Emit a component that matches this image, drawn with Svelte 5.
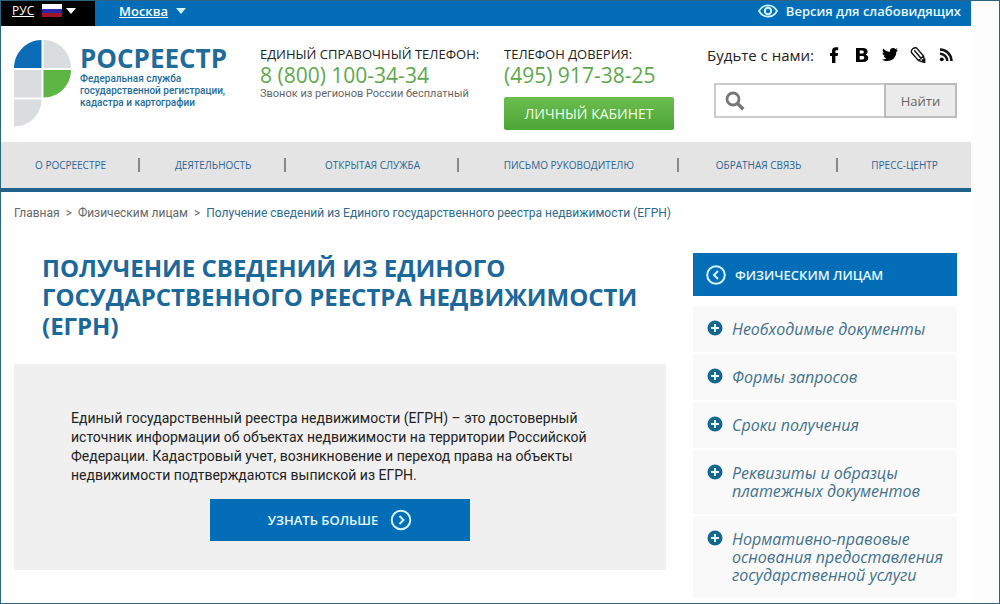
<script lang="ts">
	type MenuItem = { title: string; href: string };

	const navItems: MenuItem[] = [
		{ title: 'О РОСРЕЕСТРЕ', href: '#about' },
		{ title: 'ДЕЯТЕЛЬНОСТЬ', href: '#activity' },
		{ title: 'ОТКРЫТАЯ СЛУЖБА', href: '#open' },
		{ title: 'ПИСЬМО РУКОВОДИТЕЛЮ', href: '#letter' },
		{ title: 'ОБРАТНАЯ СВЯЗЬ', href: '#feedback' },
		{ title: 'ПРЕСС-ЦЕНТР', href: '#press' }
	];

	const sideItems: MenuItem[] = [
		{ title: 'Необходимые документы', href: '#documents' },
		{ title: 'Формы запросов', href: '#forms' },
		{ title: 'Сроки получения', href: '#terms' },
		{ title: 'Реквизиты и образцы платежных документов', href: '#payment' },
		{ title: 'Нормативно-правовые основания предоставления государственной услуги', href: '#law' }
	];

	let query = $state('');
</script>

<div class="page">
	<div class="site">
		<div class="topbar">
			<button class="lang" type="button">
				<span class="underlined">РУС</span>
				<svg class="flag" width="20" height="13" viewBox="0 0 20 13" aria-hidden="true">
					<rect width="20" height="5" fill="#fff" />
					<rect y="5" width="20" height="4" fill="#2b2ba8" />
					<rect y="9" width="20" height="4" fill="#a3152b" />
				</svg>
				<svg width="10" height="6" viewBox="0 0 10 6" aria-hidden="true"><path d="M0 0h10L5 6z" fill="#fff" /></svg>
			</button>
			<button class="city" type="button">
				<span class="underlined">Москва</span>
				<svg width="10" height="6" viewBox="0 0 10 6" aria-hidden="true"><path d="M0 0h10L5 6z" fill="#d5f3ff" /></svg>
			</button>
			<a class="vision" href="#vision">
				<svg width="20" height="14" viewBox="0 0 20 14" fill="none" stroke="#d5f3ff" aria-hidden="true">
					<path d="M1 7c4-7.5 14-7.5 18 0c-4 7.500-14 7.500-18 0z" stroke-width="1.700" />
					<circle cx="10" cy="7" r="3.200" stroke-width="2" />
				</svg>
				Версия для слабовидящих
			</a>
		</div>

		<header class="header">
			<a class="logo" href="#home">
				<svg width="58" height="88" viewBox="0 0 58 88" aria-hidden="true">
					<path d="M27.500 0v28H0C0 13 12 0 27.500 0z" fill="#0b6cb8" />
					<path d="M29.500 0v28H57C57 13 45 0 29.500 0z" fill="#d9dde0" />
					<path d="M0 30h27.500v27.500H0z" fill="#d9dde0" />
					<path d="M29.500 30H57c0 15-12 27.500-27.500 27.500z" fill="#5db544" />
					<path d="M0 59.500h27.500c0 14-11 27-27.500 27z" fill="#d9dde0" />
				</svg>
				<span class="logo-text">
					<strong>РОСРЕЕСТР</strong>
					<span>Федеральная служба</span>
					<span>государственной регистрации,</span>
					<span>кадастра и картографии</span>
				</span>
			</a>

			<div class="contact">
				<span class="contact-title">ЕДИНЫЙ СПРАВОЧНЫЙ ТЕЛЕФОН:</span>
				<a class="phone" href="tel:88001003434">8 (800) 100-34-34</a>
				<span class="note">Звонок из регионов России бесплатный</span>
			</div>

			<div class="contact">
				<span class="contact-title">ТЕЛЕФОН ДОВЕРИЯ:</span>
				<a class="phone" href="tel:4959173825">(495) 917-38-25</a>
				<button class="cabinet" type="button">ЛИЧНЫЙ КАБИНЕТ</button>
			</div>

			<div class="tools">
				<div class="social">
					<span>Будьте с нами:</span>
					<a href="#facebook" aria-label="Facebook">
						<svg width="16" height="16" viewBox="0 0 16 16"><path d="M6 16V9H4V6h2V4.300C6 1.600 7.300.3 9.800.3h2.400v3h-1.500c-1 0-1.300.4-1.300 1.300V6H12l-.4 3H9.400v7z" /></svg>
					</a>
					<a href="#vk" aria-label="ВКонтакте">
						<svg width="16" height="16" viewBox="0 0 16 16"><path fill-rule="evenodd" d="M2 1h7c3.200 0 4.600 1.500 4.600 3.700 0 1.500-.8 2.500-2.100 3 1.800.4 2.800 1.600 2.800 3.300 0 2.700-1.900 4-5.200 4H2zM5.700 3.600v3h2.200c1.300 0 1.900-.5 1.900-1.500s-.6-1.500-1.900-1.500zM5.700 9v3.400h2.500c1.400 0 2.100-.6 2.100-1.700S9.600 9 8.200 9z" /></svg>
					</a>
					<a href="#twitter" aria-label="Twitter">
						<svg width="16" height="16" viewBox="0 0 16 16"><path d="M16 3.500l-1.700 1.600c0 5-3.800 9-8.700 9-2.100 0-4-.5-5.600-1.600 1.700.1 3.200-.3 4.600-1.300-1.500-.1-2.500-1-2.900-2.300h1.400C1.500 8.500.5 7.200.6 5.500l1.400.4C.7 4.800.3 3.200 1.200 1.600 2.900 3.600 5.100 4.800 7.900 5c-.5-2.500 1.200-4.100 3.200-4.100 1 0 1.800.4 2.400 1l2.100-.8-1.300 1.800z" /></svg>
					</a>
					<a href="#livejournal" aria-label="LiveJournal">
						<svg width="16" height="16" viewBox="0 0 16 16" fill="none" stroke="#111" stroke-width="1.400"><path d="M1.500 5.500L8.300 13.500l6.200 2-.9-6.400L6.600 1C4 0 .6 2.700 1.500 5.500zM4.200 3.200l7 8.300M8.300 13.500l5.300-4.400" /><path d="M12.500 13l2 2.500.3-3z" fill="#111" /></svg>
					</a>
					<a href="#rss" aria-label="RSS">
						<svg width="16" height="16" viewBox="0 0 16 16"><circle cx="3.800" cy="12.300" r="1.900" /><path d="M2 6.700c4 0 7.300 3.300 7.300 7.300M2 2.500C8.300 2.500 13.500 7.700 13.500 14" fill="none" stroke="#111" stroke-width="2.500" /></svg>
					</a>
				</div>
				<form class="search" onsubmit={(e) => e.preventDefault()}>
					<label for="search-query" aria-label="Поиск">
						<svg width="20" height="20" viewBox="0 0 20 20" fill="none" stroke="#777"><circle cx="8" cy="8" r="6" stroke-width="2.800" /><path d="M12.300 12.300l6 6" stroke-width="3.400" /></svg>
					</label>
					<input id="search-query" type="text" bind:value={query} />
					<button type="submit">Найти</button>
				</form>
			</div>
		</header>

		<nav class="nav">
			<ul>
				{#each navItems as item}
					<li><a href={item.href}>{item.title}</a></li>
				{/each}
			</ul>
		</nav>

		<div class="breadcrumbs">
			<a href="#home">Главная</a>
			<span>&gt;</span>
			<a href="#persons">Физическим лицам</a>
			<span>&gt;</span>
			<a class="current" href="#egrn">Получение сведений из Единого государственного реестра недвижимости (ЕГРН)</a>
		</div>

		<div class="content">
			<main>
				<h1>ПОЛУЧЕНИЕ СВЕДЕНИЙ ИЗ ЕДИНОГО ГОСУДАРСТВЕННОГО РЕЕСТРА НЕДВИЖИМОСТИ (ЕГРН)</h1>
				<section class="intro">
					<p>
						Единый государственный реестра недвижимости (ЕГРН) – это достоверный источник информации об
						объектах недвижимости на территории Российской Федерации. Кадастровый учет, возникновение и
						переход права на объекты недвижимости подтверждаются выпиской из ЕГРН.
					</p>
					<button class="more" type="button">
						УЗНАТЬ БОЛЬШЕ
						<svg width="22" height="22" viewBox="0 0 22 22" fill="none" stroke="#d5f3ff" stroke-width="2" aria-hidden="true">
							<circle cx="11" cy="11" r="9.300" />
							<path d="M9.500 7l4 4-4 4" />
						</svg>
					</button>
				</section>
			</main>

			<aside>
				<a class="side-title" href="#persons">
					<svg width="20" height="20" viewBox="0 0 20 20" fill="none" stroke="#d5f3ff" stroke-width="2" aria-hidden="true">
						<circle cx="10" cy="10" r="8.800" />
						<path d="M12 6l-4 4 4 4" />
					</svg>
					ФИЗИЧЕСКИМ ЛИЦАМ
				</a>
				<ul class="side-menu">
					{#each sideItems as item}
						<li>
							<svg width="16" height="16" viewBox="0 0 16 16" aria-hidden="true">
								<circle cx="8" cy="8" r="7.500" fill="#14688f" />
								<path d="M8 4v8M4 8h8" stroke="#e4f8ff" stroke-width="2" />
							</svg>
							<a href={item.href}>{item.title}</a>
						</li>
					{/each}
				</ul>
			</aside>
		</div>
	</div>
</div>

<style>
	:global(body) {
		background: #fff;
	}

	.page {
		box-sizing: border-box;
		min-height: 100vh;
		padding-right: 28px;
		border: 1px solid #2d637f;
		background: #fdfdfd;
		font-family: 'Open Sans', 'Noto Sans', sans-serif;
		font-size: 13px;
		line-height: 18px;
		color: #222;
	}

	.site {
		box-sizing: border-box;
		min-height: calc(100vh - 2px);
		background: #fff;
	}

	a {
		color: inherit;
		text-decoration: none;
	}

	button {
		padding: 0;
		border: 0;
		font: inherit;
		color: inherit;
		cursor: pointer;
	}

	ul {
		margin: 0;
		padding: 0;
		list-style: none;
	}

	svg {
		display: block;
		flex: none;
	}

	.topbar {
		display: flex;
		height: 25px;
		background: #036eb7;
		color: #fff;
	}

	.lang,
	.city,
	.vision {
		display: flex;
		align-items: center;
		padding-bottom: 6px;
	}

	.lang {
		gap: 4px;
		width: 94px;
		box-sizing: border-box;
		padding-left: 11px;
		background: #000;
		font-size: 12px;
	}

	.flag {
		margin-left: 4px;
	}

	.city {
		gap: 8px;
		margin-left: 24px;
		background: none;
		font-size: 13px;
		font-weight: 600;
	}

	.underlined {
		text-decoration: underline;
	}

	.vision {
		gap: 8px;
		margin-left: auto;
		padding-right: 10px;
		font-weight: 600;
		color: #e4f8ff;
	}

	.header {
		display: grid;
		grid-template-columns: 246px 244px auto 1fr;
		box-sizing: border-box;
		min-height: 116px;
		padding: 14px 14px 8px 13px;
	}

	.logo {
		display: flex;
		gap: 8px;
		color: #1f6c98;
	}

	.logo-text {
		display: flex;
		flex-direction: column;
		padding-top: 4px;
		font-family: Roboto, sans-serif;
		font-size: 10px;
		font-weight: 500;
		line-height: 12px;
		white-space: nowrap;
	}

	.logo-text strong {
		font-family: 'Open Sans', sans-serif;
		font-size: 26px;
		line-height: 29px;
	}

	.contact {
		display: flex;
		flex-direction: column;
		align-items: flex-start;
		padding-top: 5px;
	}

	.contact-title {
		white-space: nowrap;
	}

	.phone {
		font-size: 21px;
		line-height: 24px;
		color: #5fa84e;
	}

	.note {
		font-family: Roboto, sans-serif;
		font-size: 11px;
		line-height: 14px;
		color: #666;
	}

	.cabinet {
		width: 170px;
		height: 33px;
		margin-top: 10px;
		border-radius: 2px;
		background: linear-gradient(#6cbd50, #4ca636);
		font-size: 14px;
		color: #f0ffe8;
	}

	.tools {
		display: flex;
		flex-direction: column;
		align-items: flex-end;
		gap: 18px;
		padding-top: 5px;
	}

	.social {
		display: flex;
		align-items: center;
		gap: 12px;
		padding-right: 3px;
		font-size: 15px;
		line-height: 20px;
	}

	.search {
		display: flex;
		box-sizing: border-box;
		width: 243px;
		height: 35px;
		border: 2px solid #ccc;
	}

	.search label {
		display: flex;
		align-items: center;
		padding-left: 9px;
	}

	.search input {
		flex: 1;
		min-width: 0;
		border: 0;
		outline: 0;
		font: inherit;
	}

	.search button {
		width: 73px;
		margin: -2px;
		border: 2px solid #bbb;
		background: #ebebeb;
		color: #666;
	}

	.nav {
		border-bottom: 4px solid #1f618b;
		background: #e4e4e4;
	}

	.nav ul {
		display: table;
		width: 100%;
		height: 46px;
	}

	.nav li {
		display: table-cell;
		padding: 0 15px;
		background: linear-gradient(#888, #888) right center / 2px 14px no-repeat;
		font-size: 10px;
		text-align: center;
		vertical-align: middle;
		white-space: nowrap;
		color: #2a6594;
	}

	.nav li:last-child {
		background: none;
	}

	.breadcrumbs {
		display: flex;
		gap: 6px;
		padding: 12px 13px;
		font-family: Roboto, sans-serif;
		font-size: 12px;
		color: #666;
	}

	.current {
		color: #2c6a8c;
	}

	.content {
		display: grid;
		grid-template-columns: 1fr 264px;
		gap: 27px;
		padding: 19px 14px 5px 13px;
	}

	h1 {
		margin: 0;
		padding: 0 0 24px 28px;
		font-size: 24px;
		line-height: 29px;
		color: #1b689b;
	}

	.intro {
		padding: 45px 57px 29px;
		background: #f0f0f0;
	}

	p {
		margin: 0;
		font-family: Roboto, sans-serif;
		font-size: 14px;
		line-height: 19px;
	}

	.more {
		display: flex;
		align-items: center;
		justify-content: center;
		gap: 12px;
		width: 260px;
		height: 42px;
		margin: 14px auto 0;
		background: #036eb7;
		color: #e4f8ff;
		font-weight: 600;
	}

	.side-title {
		display: flex;
		align-items: center;
		gap: 9px;
		height: 43px;
		margin-bottom: 10px;
		padding-left: 13px;
		background: #036eb7;
		color: #e4f8ff;
		font-weight: 600;
	}

	.side-menu {
		display: flex;
		flex-direction: column;
		gap: 2px;
	}

	.side-menu li {
		display: flex;
		gap: 9px;
		padding: 14px 10px 14px 14px;
		background: #f9f9f9;
		font-size: 16px;
		font-style: italic;
		color: #42718a;
	}
</style>
